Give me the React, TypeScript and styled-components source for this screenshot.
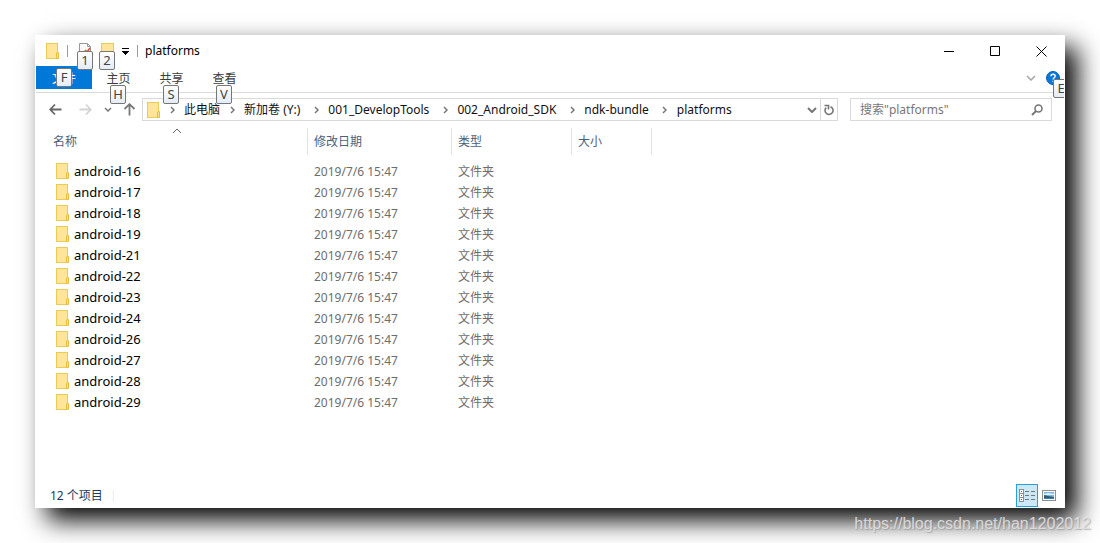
import React from 'react';
import styled, { createGlobalStyle } from 'styled-components';

const GlobalStyle = createGlobalStyle`
  * { box-sizing: border-box; }
  body {
    margin: 0;
    background: #fff;
    color: #000;
    font: 12px/16px "Noto Sans", "Noto Sans CJK SC", sans-serif;
  }
  button, input { font: inherit; color: inherit; }
  svg { display: block; flex: none; }
`;

const Page = styled.div`
  position: relative;
  display: flex;
  min-height: 100vh;
  padding: 35px;
`;

const Window = styled.main`
  display: flex;
  flex: 1;
  flex-direction: column;
  min-width: 0;
  overflow: hidden;
  border: 1px solid #fff;
  background: #fff;
  box-shadow: 12px 12px 24px #000;
`;

const PlainButton = styled.button`
  position: relative;
  display: flex;
  flex: none;
  align-items: center;
  justify-content: center;
  padding: 0;
  border: 0;
  background: none;
`;

const TitleBar = styled.header`
  display: flex;
  align-items: center;
  height: 30px;
  padding-left: 10px;
`;

const Divider = styled.span<{ $tone?: string; $gap?: number }>`
  flex: none;
  width: 1px;
  height: 12px;
  margin: 0 ${(p) => p.$gap ?? 8}px;
  background: ${(p) => p.$tone ?? '#9a9a9a'};
`;

const QuickButton = styled(PlainButton)`
  justify-content: flex-start;
  width: 22px;
  height: 18px;
  padding-left: 3px;
`;

const Title = styled.h1`
  flex: 1;
  margin: 0;
  padding-left: 7px;
  font-size: 12px;
  font-weight: 400;
`;

const CaptionButton = styled(PlainButton)`
  width: 46px;
  height: 30px;
`;

const KeyTip = styled.kbd<{ $left: number; $top: number }>`
  position: absolute;
  z-index: 1;
  left: ${(p) => p.$left}px;
  top: ${(p) => p.$top}px;
  width: 16px;
  height: 19px;
  border: 1px solid #767676;
  border-radius: 2px;
  background: linear-gradient(#fff, #e4ecf7);
  color: #444;
  font: 13px/17px "Noto Sans", sans-serif;
  text-align: center;
`;

const Ribbon = styled.nav`
  display: flex;
  padding-bottom: 3px;
  border-bottom: 1px solid #dadbdc;
`;

const Tab = styled(PlainButton)<{ $file?: boolean }>`
  width: ${(p) => (p.$file ? 56 : 53)}px;
  height: 23px;
  padding-top: 2px;
  background: ${(p) => (p.$file ? '#0078d7' : 'transparent')};
  color: ${(p) => (p.$file ? '#fff' : '#3c3c3c')};
`;

const Spacer = styled.span`
  flex: 1;
`;

const RibbonButton = styled(PlainButton)`
  width: 22px;
  height: 23px;
`;

const AddressRow = styled.div`
  display: flex;
  align-items: center;
  padding: 5px 12px 7px 4px;
`;

const NavButton = styled(PlainButton)<{ $width: number }>`
  width: ${(p) => p.$width}px;
  height: 23px;
`;

const AddressBox = styled.div`
  display: flex;
  flex: 1;
  align-items: center;
  min-width: 0;
  height: 23px;
  margin-right: 12px;
  border: 1px solid #d9d9d9;
  padding-left: 4px;
`;

const Crumbs = styled.nav`
  display: flex;
  flex: 1;
  align-items: center;
  min-width: 0;
  overflow: hidden;
  white-space: nowrap;
`;

const CrumbLink = styled.a`
  color: #111;
  text-decoration: none;
`;

const CrumbArrow = styled.span<{ $wide?: boolean }>`
  display: flex;
  flex: none;
  justify-content: center;
  width: ${(p) => (p.$wide ? 28 : 24)}px;
  padding-left: ${(p) => (p.$wide ? 4 : 0)}px;
`;

const BoxButton = styled(PlainButton)<{ $edge?: boolean }>`
  width: 17px;
  height: 21px;
  border-left: ${(p) => (p.$edge ? '1px solid #d9d9d9' : '0')};
`;

const SearchBox = styled.label`
  display: flex;
  align-items: center;
  width: 202px;
  height: 23px;
  border: 1px solid #d9d9d9;
  padding: 0 8px 0 9px;
`;

const SearchInput = styled.input`
  flex: 1;
  min-width: 0;
  padding: 0;
  border: 0;
  outline: 0;
  background: none;
  &::placeholder { color: #777; opacity: 1; }
`;

const ListPane = styled.section`
  flex: 1;
`;

const FileTable = styled.table`
  width: 100%;
  border-collapse: separate;
  border-spacing: 0;
  table-layout: fixed;
  text-align: left;
  thead::after { content: ""; display: block; height: 6px; }
`;

const Column = styled.col<{ $width?: number }>`
  width: ${(p) => (p.$width ? `${p.$width}px` : 'auto')};
`;

const HeadCell = styled.th<{ $first?: boolean }>`
  position: relative;
  height: 27px;
  padding: 0 0 0 ${(p) => (p.$first ? 17 : 6)}px;
  border-right: 1px solid #e2e2e2;
  color: #4c607a;
  font-weight: 400;
`;

const RestCell = styled.td`
  padding: 0;
`;

const SortMark = styled.span`
  position: absolute;
  top: 0;
  left: 50%;
`;

const Cell = styled.td`
  height: 21px;
  padding: 0 0 0 6px;
  color: #6d6d6d;
`;

const NameCell = styled(Cell)`
  padding: 0 0 1px 20px;
  color: #000;
  font-size: 13px;
`;

const FileName = styled.span`
  display: flex;
  align-items: center;
  gap: 5px;
`;

const StatusBar = styled.footer`
  display: flex;
  align-items: center;
  height: 23px;
  padding: 0 4px 0 14px;
  color: #1e395b;
`;

const ViewButton = styled(PlainButton)<{ $active?: boolean }>`
  width: 22px;
  height: 23px;
  border: ${(p) => (p.$active ? '1px solid #26a0da' : '0')};
  background: ${(p) => (p.$active ? '#cbe8f6' : 'transparent')};
`;

const Watermark = styled.a`
  position: absolute;
  right: 9px;
  bottom: 9px;
  color: rgba(225, 225, 225, 0.9);
  font: 16px/20px "Liberation Sans", sans-serif;
  text-decoration: none;
  text-shadow: 1px 1px 1px rgba(130, 130, 130, 0.5);
`;

const FolderIcon = () => (
  <svg width="13" height="16" viewBox="0 0 13 16">
    <rect x=".5" y=".5" width="11" height="15" fill="#ffe597" stroke="#eccb55" />
    <path d="M10.5 15.5v-5.5l1-.5h1v6z" fill="#ffe08a" stroke="#e6bd3c" />
  </svg>
);

const NewFolderIcon = () => (
  <svg width="13" height="16" viewBox="0 0 13 16">
    <rect x=".5" y=".5" width="12" height="15" fill="#ffe597" stroke="#eccb55" />
  </svg>
);

const DocumentIcon = () => (
  <svg width="13" height="16" viewBox="0 0 13 16">
    <path d="M.5.5h8l3 3v12H.5z" fill="#fafafa" stroke="#9a9a9a" />
    <path d="M8.5.5v3h3" fill="none" stroke="#9a9a9a" />
    <path d="M6 7l2 2 3-4" fill="none" stroke="#d9532c" strokeWidth="1.6" />
  </svg>
);

const Chevron = ({ dir, color = '#777', size = 4, weight = 1.5 }: {
  dir: 'right' | 'down' | 'up';
  color?: string;
  size?: number;
  weight?: number;
}) => {
  const s = size;
  const d = {
    right: `M1 1l${s - 1} ${s - 1}l-${s - 1} ${s - 1}`,
    down: `M1 1l${s - 1} ${s - 1}l${s - 1} -${s - 1}`,
    up: `M1 ${s}l${s - 1} -${s - 1}l${s - 1} ${s - 1}`,
  }[dir];
  const w = dir === 'right' ? s + 1 : s * 2;
  const h = dir === 'right' ? s * 2 : s + 1;
  return (
    <svg width={w} height={h} viewBox={`0 0 ${w} ${h}`}>
      <path d={d} fill="none" stroke={color} strokeWidth={weight} />
    </svg>
  );
};

const Arrow = ({ angle, color }: { angle: number; color: string }) => (
  <svg width="13" height="13" viewBox="0 0 13 13">
    <path
      d="M12.500 6.500H1.500M6 1.500L1.200 6.500L6 11.500"
      fill="none"
      stroke={color}
      strokeWidth="1.800"
      transform={`rotate(${angle} 6.500 6.500)`}
    />
  </svg>
);

const crumbs = ['此电脑', '新加卷 (Y:)', '001_DevelopTools', '002_Android_SDK', 'ndk-bundle', 'platforms'];
const versions = [16, 17, 18, 19, 21, 22, 23, 24, 26, 27, 28, 29];
const tabs = [
  { label: '主页', tip: 'H' },
  { label: '共享', tip: 'S' },
  { label: '查看', tip: 'V' },
];

export default function App() {
  return (
    <>
      <GlobalStyle />
      <Page>
        <Window>
          <TitleBar>
            <FolderIcon />
            <Divider />
            <QuickButton aria-label="属性">
              <DocumentIcon />
              <KeyTip $left={1} $top={9}>1</KeyTip>
            </QuickButton>
            <QuickButton aria-label="新建文件夹">
              <NewFolderIcon />
              <KeyTip $left={1} $top={9}>2</KeyTip>
            </QuickButton>
            <PlainButton aria-label="自定义快速访问工具栏">
              <svg width="17" height="7" viewBox="0 0 17 7" shapeRendering="crispEdges">
                <path d="M2 .5h7" stroke="#000" />
                <path d="M2 3h7v1H8v1H7v1H6v1H5V6H4V5H3V4H2z" fill="#000" />
              </svg>
            </PlainButton>
            <Divider $gap={0} />
            <Title>platforms</Title>
            <CaptionButton aria-label="最小化">
              <svg width="11" height="11" viewBox="0 0 11 11"><path d="M0 5.500h10" stroke="#000" /></svg>
            </CaptionButton>
            <CaptionButton aria-label="最大化">
              <svg width="11" height="11" viewBox="0 0 11 11"><path d="M.5.5h9v9h-9z" fill="none" stroke="#000" /></svg>
            </CaptionButton>
            <CaptionButton aria-label="关闭">
              <svg width="11" height="11" viewBox="0 0 11 11"><path d="M.5.5l10 10M10.500.5l-10 10" stroke="#000" /></svg>
            </CaptionButton>
          </TitleBar>

          <Ribbon>
            <Tab $file>
              文件
              <KeyTip $left={20} $top={2}>F</KeyTip>
            </Tab>
            {tabs.map((t) => (
              <Tab key={t.tip}>
                {t.label}
                <KeyTip $left={18} $top={19}>{t.tip}</KeyTip>
              </Tab>
            ))}
            <Spacer />
            <RibbonButton aria-label="展开功能区">
              <Chevron dir="down" color="#a5a5a5" size={5} />
            </RibbonButton>
            <RibbonButton aria-label="帮助">
              <svg width="14" height="14" viewBox="0 0 14 14">
                <circle cx="7" cy="7" r="6.500" fill="#0a78d6" stroke="#0a5fae" />
                <path d="M5 5.300c0-2.800 4.200-2.600 4.200-.2C9.200 6.700 7.100 6.800 7.100 8.600M7.100 9.700v1.400" fill="none" stroke="#fff" strokeWidth="1.400" />
              </svg>
              <KeyTip $left={11} $top={13}>E</KeyTip>
            </RibbonButton>
          </Ribbon>

          <AddressRow>
            <NavButton $width={30} aria-label="后退"><Arrow angle={0} color="#666" /></NavButton>
            <NavButton $width={30} aria-label="前进"><Arrow angle={180} color="#d4d4d4" /></NavButton>
            <NavButton $width={16} aria-label="最近浏览的位置"><Chevron dir="down" /></NavButton>
            <NavButton $width={26} aria-label="上移"><Arrow angle={90} color="#777" /></NavButton>
            <AddressBox>
              <FolderIcon />
              <Crumbs aria-label="地址">
                {crumbs.map((c, i) => (
                  <React.Fragment key={c}>
                    <CrumbArrow $wide={i > 1}><Chevron dir="right" /></CrumbArrow>
                    <CrumbLink href="#">{c}</CrumbLink>
                  </React.Fragment>
                ))}
              </Crumbs>
              <BoxButton aria-label="以前的位置"><Chevron dir="down" size={5} weight={2} /></BoxButton>
              <BoxButton $edge aria-label="刷新">
                <svg width="10" height="12" viewBox="0 0 10 12">
                  <path d="M6.500 2.700A4 4 0 1 1 2.200 3.600" fill="none" stroke="#777" strokeWidth="1.600" />
                  <path d="M.5 1.500H4.500V5.500" fill="none" stroke="#777" strokeWidth="1.600" />
                </svg>
              </BoxButton>
            </AddressBox>
            <SearchBox>
              <SearchInput type="search" aria-label="搜索" placeholder={'搜索"platforms"'} />
              <svg width="12" height="12" viewBox="0 0 12 12">
                <circle cx="7.500" cy="4.500" r="3.500" fill="none" stroke="#777" strokeWidth="1.600" />
                <path d="M5 7L1 11" stroke="#777" strokeWidth="2" />
              </svg>
            </SearchBox>
          </AddressRow>

          <ListPane>
            <FileTable>
              <colgroup>
                <Column $width={272} />
                <Column $width={144} />
                <Column $width={120} />
                <Column $width={80} />
                <Column />
              </colgroup>
              <thead>
                <tr>
                  <HeadCell $first>
                    名称
                    <SortMark><Chevron dir="up" size={5} color="#666" weight={1} /></SortMark>
                  </HeadCell>
                  <HeadCell>修改日期</HeadCell>
                  <HeadCell>类型</HeadCell>
                  <HeadCell>大小</HeadCell>
                  <RestCell />
                </tr>
              </thead>
              <tbody>
                {versions.map((v) => (
                  <tr key={v}>
                    <NameCell>
                      <FileName><FolderIcon />android-{v}</FileName>
                    </NameCell>
                    <Cell>2019/7/6 15:47</Cell>
                    <Cell>文件夹</Cell>
                    <Cell />
                    <RestCell />
                  </tr>
                ))}
              </tbody>
            </FileTable>
          </ListPane>

          <StatusBar>
            12 个项目
            <Divider $tone="#ededed" $gap={10} />
            <Spacer />
            <ViewButton $active aria-label="详细信息">
              <svg width="16" height="13" viewBox="0 0 16 13" shapeRendering="crispEdges">
                <path d="M.5.5h4v12h-4zM.5 4.500h4M.5 8.500h4" fill="#fff" stroke="#8d8d8d" />
                <path d="M2 2.500h1M2 6.500h1" stroke="#567" />
                <path d="M2 10.500h1" stroke="#c22" />
                <path d="M6 2.500h4M12 2.500h4M6 6.500h4M12 6.500h4M6 10.500h4M12 10.500h4" stroke="#777" />
              </svg>
            </ViewButton>
            <ViewButton aria-label="大图标">
              <svg width="14" height="11" viewBox="0 0 14 11">
                <rect x=".5" y=".5" width="13" height="10" fill="#fff" stroke="#8d8d8d" />
                <rect x="2" y="2" width="10" height="7" fill="#7db6e8" />
                <path d="M2 4l4-1 6 1v1H2z" fill="#e3f1fb" />
                <path d="M2 5l4 1 6 1v2H2z" fill="#2c5d70" />
                <path d="M2 8h10v1H2z" fill="#3b7fb8" />
              </svg>
            </ViewButton>
          </StatusBar>
        </Window>
        <Watermark href="#">https://blog.csdn.net/han1202012</Watermark>
      </Page>
    </>
  );
}
